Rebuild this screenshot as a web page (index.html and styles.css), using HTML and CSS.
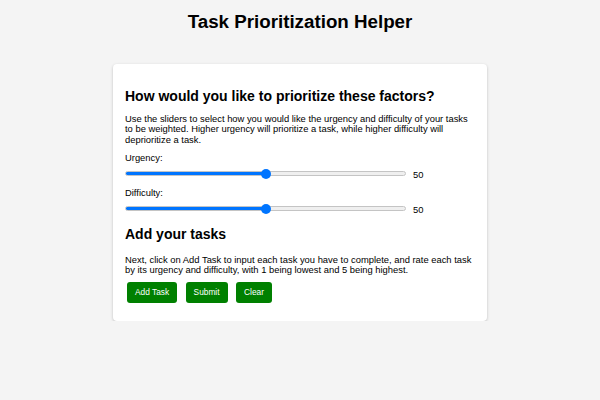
FILE: index.html
```html
<!DOCTYPE html>
<html lang="en">
<head>
<meta charset="utf-8">
<title>Task Prioritization Helper</title>
<link rel="stylesheet" href="styles.css">
</head>
<body>
<h1 class="title">Task Prioritization Helper</h1>
<main class="card">
  <h2 class="heading">How would you like to prioritize these factors?</h2>
  <p class="text">Use the sliders to select how you would like the urgency and difficulty of your tasks to be weighted. Higher urgency will prioritize a task, while higher difficulty will deprioritize a task.</p>
  <label class="label" for="urgency">Urgency:</label>
  <div class="slider-row">
    <input class="slider" type="range" id="urgency" min="0" max="100" value="50">
    <span class="value">50</span>
  </div>
  <label class="label" for="difficulty">Difficulty:</label>
  <div class="slider-row">
    <input class="slider" type="range" id="difficulty" min="0" max="100" value="50">
    <span class="value">50</span>
  </div>
  <h2 class="heading heading-tasks">Add your tasks</h2>
  <p class="text text-tasks">Next, click on Add Task to input each task you have to complete, and rate each task by its urgency and difficulty, with 1 being lowest and 5 being highest.</p>
  <div class="buttons">
    <button class="btn" type="button">Add Task</button>
    <button class="btn" type="button">Submit</button>
    <button class="btn" type="button">Clear</button>
  </div>
</main>
</body>
</html>
```

FILE: styles.css
```css
html, body {
  margin: 0;
  padding: 0;
}
body {
  background: #f4f4f4;
  font-family: "Liberation Sans", Arial, sans-serif;
  color: #000;
  font-size: 9.5px;
}
.title {
  margin: 11px 0 0;
  font-size: 18.75px;
  line-height: 21.5px;
  text-align: center;
  font-weight: bold;
  color: #000;
}
.card {
  box-sizing: border-box;
  width: 374px;
  margin: 31px auto 0;
  padding: 12px 12px 18px;
  background: #fff;
  border-radius: 4px;
  box-shadow: 0 1px 3px rgba(0, 0, 0, 0.22);
  display: flex;
  flex-direction: column;
}
.heading {
  margin: 12px 0 0;
  font-size: 14px;
  line-height: 16px;
  font-weight: bold;
  color: #000;
}
.heading-tasks {
  margin-top: 12px;
}
.text {
  margin: 10.5px 0 0;
  font-size: 9.4px;
  line-height: 10.3px;
}
.text-tasks {
  margin-top: 13px;
}
.label {
  display: block;
  margin-top: 8px;
  font-size: 9.4px;
  line-height: 10.3px;
}
.slider-row {
  display: flex;
  align-items: center;
  gap: 7px;
  margin-top: 5.5px;
  height: 10px;
}
.label + .slider-row + .label {
  margin-top: 9.3px;
}
.slider {
  -webkit-appearance: none;
  appearance: none;
  width: 281px;
  height: 10px;
  margin: 0;
  background: transparent;
}
.slider::-webkit-slider-runnable-track {
  height: 5px;
  border-radius: 3px;
  box-sizing: border-box;
  border: 1px solid #c4c4c4;
  background: linear-gradient(to right, #0075ff 0, #0075ff 50%, #efefef 50%, #efefef 100%);
}
.slider::-webkit-slider-thumb {
  -webkit-appearance: none;
  appearance: none;
  width: 10px;
  height: 10px;
  margin-top: -3.5px;
  border-radius: 50%;
  background: #0075ff;
  border: none;
}
.value {
  font-size: 9.4px;
  line-height: 10px;
  padding-top: 2px;
}
.buttons {
  display: flex;
  gap: 8.5px;
  margin-top: 6.5px;
  padding-left: 2px;
}
.btn {
  font-family: "Liberation Sans", Arial, sans-serif;
  font-size: 8.33px;
  line-height: 10px;
  padding: 5.5px 8px;
  border: none;
  border-radius: 3px;
  background: #008000;
  color: #fff;
}
```
